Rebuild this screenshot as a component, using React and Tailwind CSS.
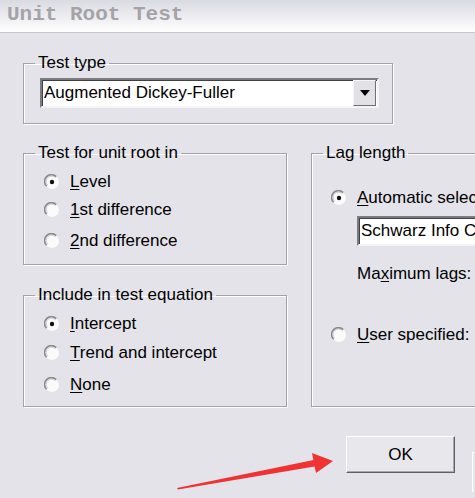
import React from "react";

function Radio({ checked }) {
  return (
    <svg width="16" height="16" viewBox="0 0 16 16" className="shrink-0">
      <circle cx="8" cy="8" r="7" fill="#fbfbfb" />
      <path d="M2.6 12.2 A6.5 6.5 0 0 1 12.2 2.6" fill="none" stroke="#8a8a8e" strokeWidth="1.6" />
      <path d="M3.6 11.2 A5 5 0 0 1 11.2 3.6" fill="none" stroke="#c4c4c8" strokeWidth="1" />
      {checked && <circle cx="8" cy="8" r="2.2" fill="#111" />}
    </svg>
  );
}

function RadioRow({ checked, mnemonic, rest, className = "" }) {
  return (
    <div className={"flex items-center h-[24px] gap-[10px] " + className}>
      <Radio checked={checked} />
      <span className="whitespace-nowrap">
        <span className="underline underline-offset-2">{mnemonic}</span>
        {rest}
      </span>
    </div>
  );
}

// classic etched group box; padding goes on the inner div so the legend stays put
function Group({ title, className = "", bodyClass = "", children }) {
  return (
    <fieldset
      className={
        "border border-[#a2a2a8] shadow-[inset_1px_1px_0_#ffffff,1px_1px_0_#ffffff] " + className
      }
    >
      <legend className="ml-[11px] px-[3px] leading-[20px]">{title}</legend>
      <div className={bodyClass}>{children}</div>
    </fieldset>
  );
}

function Combo({ text, className = "", arrow = true }) {
  return (
    <div
      className={
        "h-[30px] bg-white border-2 border-t-[#7c7c80] border-l-[#7c7c80] border-b-[#f4f4f6] border-r-[#f4f4f6] shadow-[inset_1px_1px_0_#404044] flex items-center " +
        className
      }
    >
      <span className="pl-[2px] flex-1 whitespace-nowrap overflow-hidden">{text}</span>
      {arrow && (
        <div className="w-[23px] h-[26px] mr-[1px] bg-[#e2e2e6] border border-t-[#f6f6f8] border-l-[#f6f6f8] border-b-[#707074] border-r-[#707074] flex items-center justify-center">
          <svg width="10" height="6" viewBox="0 0 10 6">
            <path d="M0 0 H10 L5 6 Z" fill="#000" />
          </svg>
        </div>
      )}
    </div>
  );
}

export default function App() {
  return (
    <div className="relative w-[475px] h-[498px] overflow-hidden bg-[#e3e3e9] text-[17px] text-black font-['Liberation_Sans',Arial,sans-serif]">
      <div className="h-[33px] border-b border-[#c6c6ce] bg-gradient-to-b from-[#dadae2] to-[#ffffff] pl-[7px] pt-[2px]">
        <span className="font-['Liberation_Mono',monospace] font-bold text-[21px] leading-[24px] text-[#a4a4a8]">
          Unit Root Test
        </span>
      </div>

      <div className="pl-[23px] pt-[20px]">
        <Group title="Test type" className="w-[370px]" bodyClass="pl-[16px] pt-[5px] pb-[15px]">
          <Combo text="Augmented Dickey-Fuller" className="w-[339px]" />
        </Group>

        <div className="flex gap-[24px] mt-[19px]">
          <div className="w-[264px] shrink-0">
            <Group title="Test for unit root in" bodyClass="pl-[20px] pb-[11px]">
              <RadioRow checked mnemonic="L" rest="evel" className="mt-[7px]" />
              <RadioRow mnemonic="1" rest="st difference" className="mt-[4px]" />
              <RadioRow mnemonic="2" rest="nd difference" className="mt-[7px]" />
            </Group>

            <Group title="Include in test equation" className="mt-[20px]" bodyClass="pl-[20px] pb-[9px]">
              <RadioRow checked mnemonic="I" rest="ntercept" className="mt-[7px]" />
              <RadioRow mnemonic="T" rest="rend and intercept" className="mt-[5px]" />
              <RadioRow mnemonic="N" rest="one" className="mt-[8px]" />
            </Group>
          </div>

          <div className="w-[220px] shrink-0">
            <Group title="Lag length" className="h-[264px]" bodyClass="pl-[19px]">
              <RadioRow checked mnemonic="A" rest="utomatic selection:" className="mt-[23px]" />
              <Combo text="Schwarz Info Criterion" arrow={false} className="ml-[26px] mt-[6px] w-[200px]" />
              <div className="ml-[26px] mt-[16px] h-[24px] flex items-center whitespace-nowrap">
                Ma<span className="underline underline-offset-2">x</span>imum lags:
              </div>
              <RadioRow mnemonic="U" rest="ser specified:" className="mt-[37px]" />
            </Group>

            <div className="flex items-start gap-[17px] mt-[29px] ml-[35px]">
              <button className="w-[109px] h-[37px] shrink-0 bg-[#e8e8ec] border border-t-[#ffffff] border-l-[#ffffff] border-b-[#606064] border-r-[#606064] shadow-[inset_-1px_-1px_0_#a8a8ac] text-[17px] font-['Liberation_Sans',Arial,sans-serif]">
                OK
              </button>
              <div className="w-[40px] h-[40px] mt-[16px] shrink-0 border-l border-t border-white bg-[#e8e8ec]" />
            </div>
          </div>
        </div>
      </div>

      <svg className="absolute inset-0 pointer-events-none" width="475" height="498" viewBox="0 0 475 498">
        <polygon points="177,488 316,459.5 317.5,466 178,489.5" fill="#f03232" />
        <polygon points="312,453 333,461 316,473" fill="#f03232" />
      </svg>
    </div>
  );
}
